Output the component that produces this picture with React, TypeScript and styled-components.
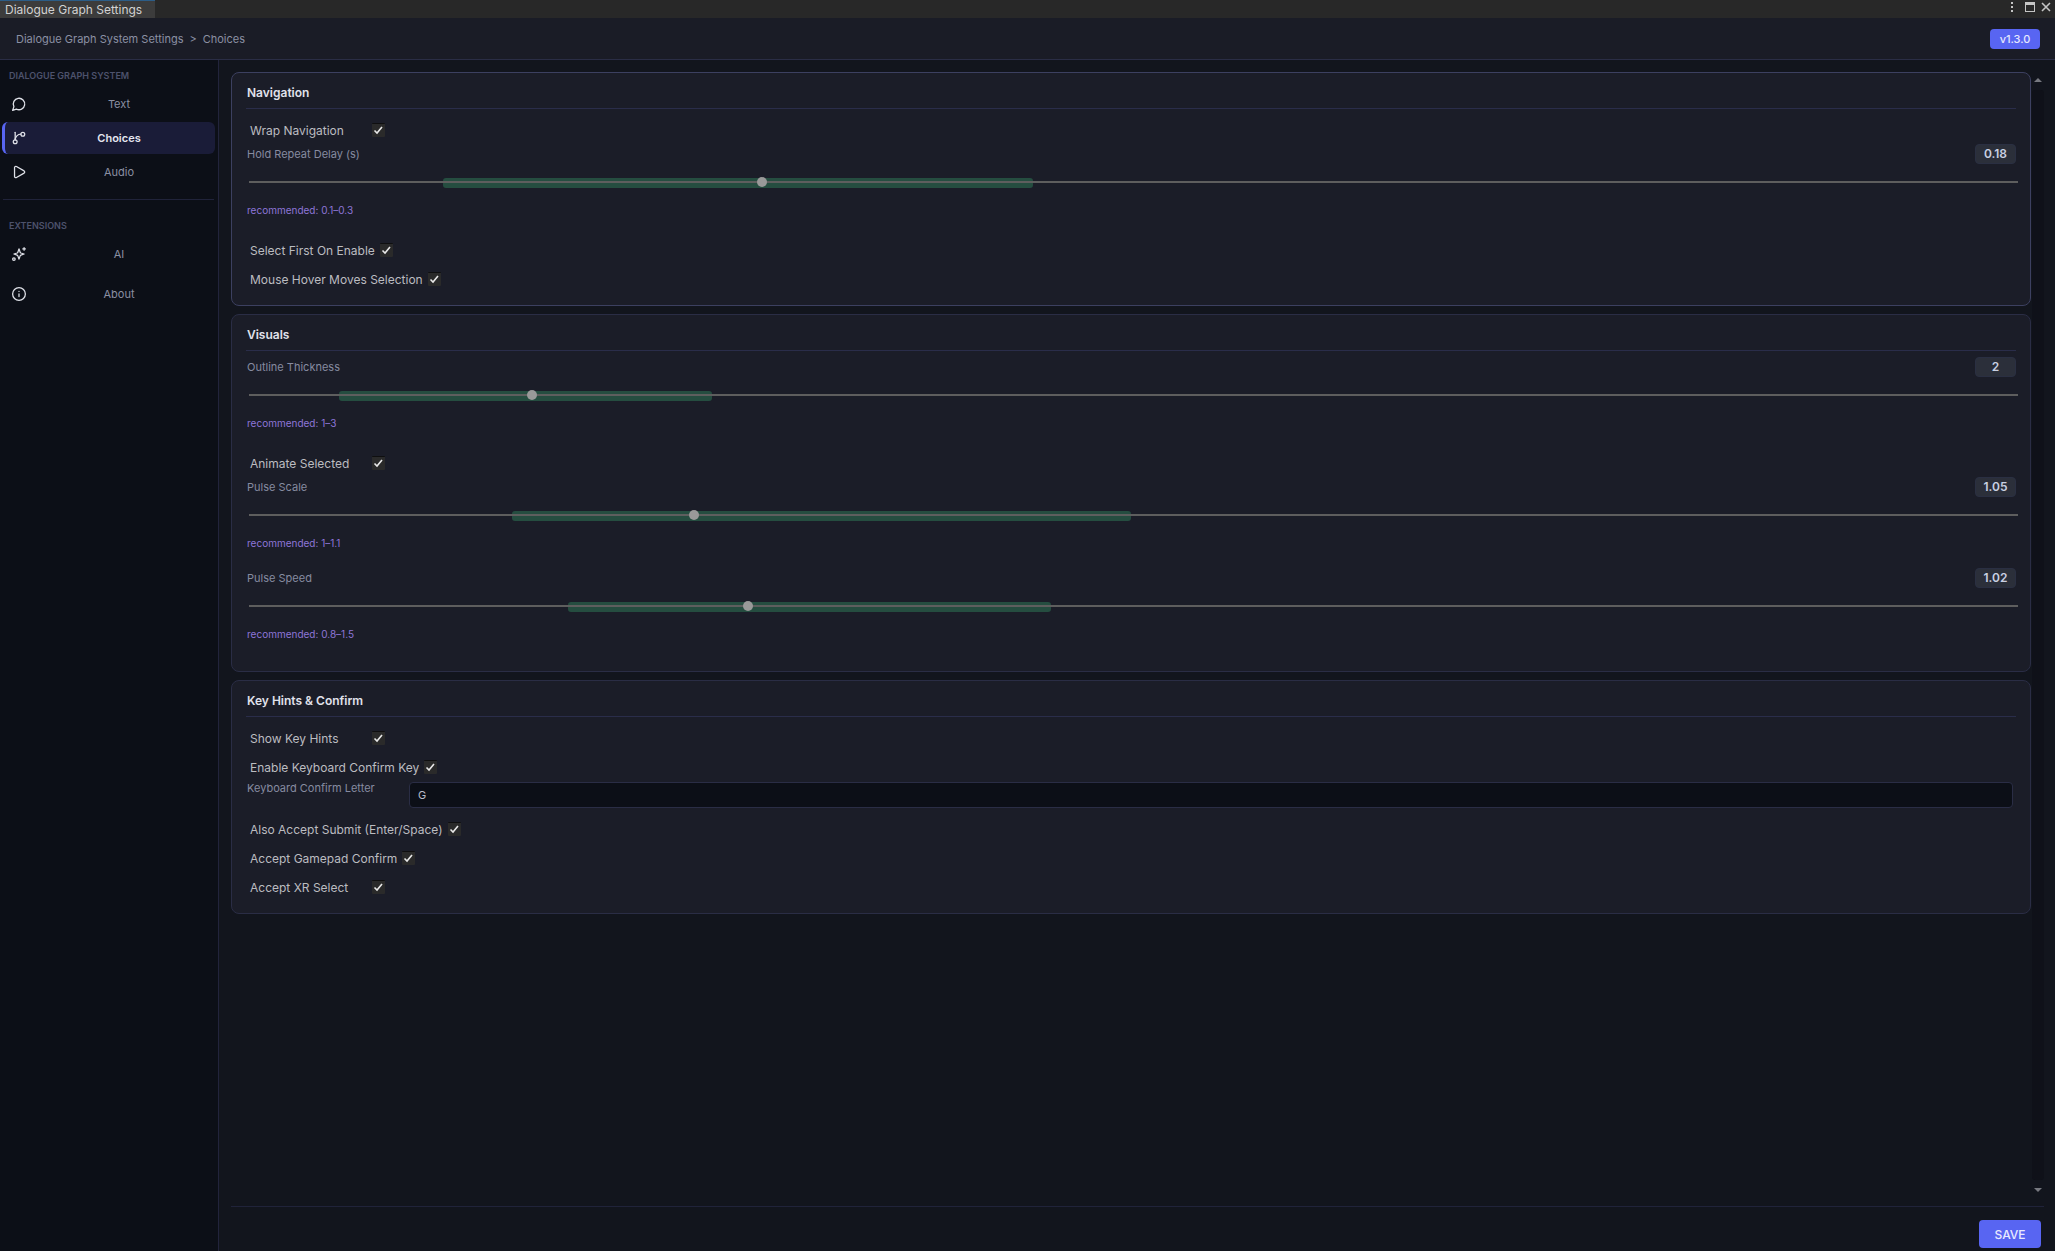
import { useId, useState } from "react";
import type { ReactNode } from "react";
import styled, { createGlobalStyle } from "styled-components";

const GlobalStyle = createGlobalStyle`
  * { box-sizing: border-box; }
  html, body, #root { height: 100%; margin: 0; }
  body { background: #12151d; }
  body, button, input { font-family: Inter, "Noto Sans", sans-serif; }
`;

const Window = styled.div`
  display: flex;
  flex-direction: column;
  height: 100%;
  min-height: 100%;
  color: #bdbfc4;
  font-size: 12px;
  line-height: 16px;
`;

const TitleBar = styled.div`
  display: flex;
  justify-content: space-between;
  flex: none;
  height: 18px;
  background: #282828;
`;

const WindowTab = styled.div`
  width: 155px;
  padding-left: 5px;
  border-top: 1px solid #2c5d87;
  background: #3c3c3c;
  color: #d2d2d2;
  font-size: 12px;
  line-height: 18px;
  white-space: nowrap;
`;

const WindowButtons = styled.div`
  display: flex;
  align-items: flex-start;
  gap: 6px;
  padding: 1px 4px 0 0;
`;

const WindowButton = styled.button`
  display: flex;
  padding: 0;
  border: 0;
  background: none;
  color: #c4c4c4;
`;

const Header = styled.header`
  display: flex;
  align-items: center;
  justify-content: space-between;
  flex: none;
  height: 42px;
  padding: 0 15px 0 16px;
  border-bottom: 1px solid #2a2d45;
  background: #1a1c26;
`;

const Breadcrumbs = styled.nav`
  display: flex;
  gap: 6px;
  color: #8b90a3;
  font-size: 11px;
`;

const Version = styled.span`
  display: grid;
  place-items: center;
  width: 50px;
  height: 20px;
  border-radius: 4px;
  background: #5865f2;
  color: #e6e8ff;
  font-size: 11px;
  font-weight: 500;
`;

const Columns = styled.div`
  display: flex;
  flex: 1;
  min-height: 0;
`;

const Sidebar = styled.aside`
  display: flex;
  flex-direction: column;
  flex: none;
  width: 219px;
  padding: 7px 3px 0 2px;
  border-right: 1px solid #22243c;
  background: #0c0f17;
`;

const NavList = styled.nav<{ $gap: number }>`
  display: flex;
  flex-direction: column;
  gap: ${(p) => p.$gap}px;
`;

const NavHeading = styled.h2`
  margin: 0;
  padding: 1px 0 4px 7px;
  color: #4d526c;
  font-size: 9px;
  font-weight: 600;
  line-height: 16px;
`;

const NavItem = styled.button<{ $active?: boolean }>`
  display: flex;
  align-items: center;
  height: 32px;
  padding: 0 3px 0 7px;
  border: 0;
  border-left: 3px solid ${(p) => (p.$active ? "#5865f2" : "transparent")};
  border-radius: 6px;
  background: ${(p) => (p.$active ? "#1a1c38" : "transparent")};
  color: ${(p) => (p.$active ? "#e4e6f0" : "#8b90a3")};
  font-size: 11px;
  font-weight: ${(p) => (p.$active ? 600 : 400)};
  line-height: 16px;
  text-align: center;
`;

const NavIcon = styled.svg`
  flex: none;
  width: 14px;
  height: 14px;
  overflow: visible;
  fill: none;
  stroke: #dfe1e8;
  stroke-width: 2;
  stroke-linecap: round;
  stroke-linejoin: round;
`;

const NavText = styled.span`
  flex: 1;
`;

const NavDivider = styled.hr`
  width: 211px;
  height: 1px;
  margin: 11px 0 17px 1px;
  border: 0;
  background: #20233a;
`;

const Main = styled.main`
  display: flex;
  flex-direction: column;
  flex: 1;
  min-width: 0;
  padding: 12px 11px 3px 12px;
`;

const ScrollArea = styled.div`
  display: flex;
  flex: 1;
  gap: 1px;
  min-height: 0;
`;

const Cards = styled.div`
  display: flex;
  flex-direction: column;
  flex: 1;
  gap: 8px;
  min-width: 0;
`;

const ScrollBar = styled.div`
  display: flex;
  flex-direction: column;
  align-items: center;
  flex: none;
  width: 12px;
  padding: 6px 0 14px;
`;

const ScrollTrack = styled.div`
  flex: 1;
  width: 12px;
  margin: 8px 0;
  border-radius: 3px;
  background: #0f1119;
`;

const ScrollArrow = styled.svg`
  width: 8px;
  height: 4px;
  fill: #777980;
`;

const Footer = styled.footer`
  display: flex;
  justify-content: flex-end;
  flex: none;
  padding: 13px 3px 0 0;
  border-top: 1px solid #20233a;
`;

const SaveButton = styled.button`
  width: 62px;
  height: 28px;
  padding: 0;
  border: 0;
  border-radius: 4px;
  background: #5865f2;
  color: #e8eaff;
  font-size: 12px;
  font-weight: 500;
`;

const CardFrame = styled.section<{ $hovered?: boolean }>`
  padding: 0 14px 12px;
  border: 1px solid ${(p) => (p.$hovered ? "#3c4060" : "#2a2d45")};
  border-radius: 8px;
  background: #1b1d28;
`;

const CardTitle = styled.h3`
  margin: 0 0 6px;
  padding: 12px 1px 7px;
  border-bottom: 1px solid #2a2d4a;
  color: #e0e2ec;
  font-size: 12px;
  font-weight: 600;
  line-height: 16px;
`;

const ToggleRow = styled.div`
  display: flex;
  align-items: center;
  height: 29px;
  padding: 1px 0 0 4px;
`;

const ToggleLabel = styled.label`
  min-width: 117px;
  margin-right: 5px;
  padding-top: 2px;
  color: #bbbcc0;
  font-size: 12px;
`;

const CheckBox = styled.input`
  width: 13px;
  height: 14px;
  margin: 0;
  appearance: none;
  border-top: 1px solid #0f0f10;
  border-radius: 1px;
  background: #2a2a2a
    url("data:image/svg+xml,%3Csvg xmlns='http://www.w3.org/2000/svg' viewBox='0 0 13 13'%3E%3Cpath d='M2.5 6.5 5 9 10 3' fill='none' stroke='%23e8e8e8' stroke-width='1.6'/%3E%3C/svg%3E")
    center / 13px 13px no-repeat;
`;

const SliderBlock = styled.div`
  height: 91px;
`;

const SliderHead = styled.div`
  display: flex;
  align-items: center;
  justify-content: space-between;
  height: 20px;
  padding-left: 1px;
`;

const FieldLabel = styled.label`
  color: #868ba0;
  font-size: 11px;
`;

const Readout = styled.output`
  display: grid;
  place-items: center;
  width: 41px;
  height: 20px;
  border: 1px solid #2a2f42;
  border-radius: 4px;
  background: #2b2f3a;
  color: #c9d0e2;
  font-size: 12px;
  font-weight: 600;
`;

const SliderTrack = styled.div`
  position: relative;
  height: 10px;
  margin: 13px -2px 0 3px;
`;

const Recommended = styled.div`
  position: absolute;
  top: 1px;
  height: 10px;
  border-radius: 3px;
  background: #254d40;
`;

const Range = styled.input`
  position: relative;
  display: block;
  width: 100%;
  height: 10px;
  margin: 0;
  appearance: none;
  background: linear-gradient(#5e5e5e, #5e5e5e) center / 100% 2px no-repeat;

  &::-webkit-slider-thumb {
    width: 10px;
    height: 10px;
    appearance: none;
    border-radius: 50%;
    background: #999999;
  }
`;

const Hint = styled.p`
  margin: 15px 0 0 1px;
  color: #8e76d8;
  font-size: 10px;
  line-height: 16px;
`;

const TextRow = styled.div`
  display: flex;
  align-items: flex-start;
  height: 33px;
  padding: 1px 3px 0 1px;
`;

const TextLabel = styled(FieldLabel)`
  width: 162px;
  line-height: 12px;
`;

const TextInput = styled.input`
  flex: 1;
  min-width: 0;
  height: 26px;
  padding: 0 8px 1px;
  border: 1px solid #2a2d45;
  border-radius: 4px;
  background: #0c0f17;
  color: #b9bcc8;
  font-size: 11px;
`;

function Card({ title, hovered, children }: { title: string; hovered?: boolean; children: ReactNode }) {
  return (
    <CardFrame $hovered={hovered}>
      <CardTitle>{title}</CardTitle>
      {children}
    </CardFrame>
  );
}

function Toggle({ label }: { label: string }) {
  const id = useId();
  return (
    <ToggleRow>
      <ToggleLabel htmlFor={id}>{label}</ToggleLabel>
      <CheckBox id={id} type="checkbox" defaultChecked />
    </ToggleRow>
  );
}

interface SliderProps {
  label: string;
  min: number;
  max: number;
  initial: number;
  hint: string;
  /** Start and end of the recommended band, in percent of the track. */
  band: [number, number];
}

function Slider({ label, min, max, initial, hint, band }: SliderProps) {
  const id = useId();
  const [value, setValue] = useState(initial);
  return (
    <SliderBlock>
      <SliderHead>
        <FieldLabel htmlFor={id}>{label}</FieldLabel>
        <Readout htmlFor={id}>{Number(value.toFixed(2))}</Readout>
      </SliderHead>
      <SliderTrack>
        <Recommended style={{ left: `${band[0]}%`, width: `${band[1] - band[0]}%` }} />
        <Range
          id={id}
          type="range"
          min={min}
          max={max}
          step="any"
          value={value}
          onChange={(e) => setValue(Number(e.target.value))}
        />
      </SliderTrack>
      <Hint>recommended: {hint}</Hint>
    </SliderBlock>
  );
}

export default function App() {
  return (
    <>
      <GlobalStyle />
      <Window>
        <TitleBar>
          <WindowTab>Dialogue Graph Settings</WindowTab>
          <WindowButtons>
            <WindowButton aria-label="Menu">
              <svg width="12" height="12" fill="currentColor">
                <rect x="4" y="1" width="2" height="2" />
                <rect x="4" y="5" width="2" height="2" />
                <rect x="4" y="9" width="2" height="2" />
              </svg>
            </WindowButton>
            <WindowButton aria-label="Maximize">
              <svg width="10" height="12" fill="none" stroke="currentColor">
                <rect x="0.5" y="1.5" width="9" height="9" />
                <path d="M0 2.5h10" strokeWidth="3" />
              </svg>
            </WindowButton>
            <WindowButton aria-label="Close">
              <svg width="10" height="12" fill="none" stroke="currentColor" strokeWidth="1.6">
                <path d="M1 2l8 8M9 2l-8 8" />
              </svg>
            </WindowButton>
          </WindowButtons>
        </TitleBar>

        <Header>
          <Breadcrumbs aria-label="Breadcrumb">
            <span>Dialogue Graph System Settings</span>
            <span>&gt;</span>
            <span>Choices</span>
          </Breadcrumbs>
          <Version>v1.3.0</Version>
        </Header>

        <Columns>
          <Sidebar>
            <NavHeading>DIALOGUE GRAPH SYSTEM</NavHeading>
            <NavList $gap={2}>
              <NavItem>
                <NavIcon viewBox="1 1 22 22">
                  <path d="M7.9 20A9 9 0 1 0 4 16.1L2 22Z" />
                </NavIcon>
                <NavText>Text</NavText>
              </NavItem>
              <NavItem $active>
                <NavIcon viewBox="1 1 22 22">
                  <path d="M6 3v12" />
                  <circle cx="18" cy="6" r="3" />
                  <circle cx="6" cy="18" r="3" />
                  <path d="M15 6a9 9 0 0 0-9 9" />
                </NavIcon>
                <NavText>Choices</NavText>
              </NavItem>
              <NavItem>
                <NavIcon viewBox="1 1 22 22">
                  <path d="M5 5a2 2 0 0 1 3-1.7l12 7a2 2 0 0 1 0 3.4l-12 7A2 2 0 0 1 5 19z" />
                </NavIcon>
                <NavText>Audio</NavText>
              </NavItem>
            </NavList>
            <NavDivider />
            <NavHeading>EXTENSIONS</NavHeading>
            <NavList $gap={8}>
              <NavItem>
                <NavIcon viewBox="1 1 22 22">
                  <path d="M12 4l1.8 5.2a2 2 0 0 0 1.2 1.2L20 12l-5 1.7a2 2 0 0 0-1.2 1.2L12 20l-1.8-5.1A2 2 0 0 0 9 13.7L4 12l5-1.6a2 2 0 0 0 1.2-1.2z" />
                  <path d="M20 2v4M22 4h-4" />
                  <circle cx="4" cy="20" r="2" />
                </NavIcon>
                <NavText>AI</NavText>
              </NavItem>
              <NavItem>
                <NavIcon viewBox="1 1 22 22">
                  <circle cx="12" cy="12" r="10" />
                  <path d="M12 16v-4M12 8h.01" />
                </NavIcon>
                <NavText>About</NavText>
              </NavItem>
            </NavList>
          </Sidebar>

          <Main>
            <ScrollArea>
              <Cards>
                <Card title="Navigation" hovered>
                  <Toggle label="Wrap Navigation" />
                  <Slider label="Hold Repeat Delay (s)" min={0.05} max={0.5} initial={0.18} hint="0.1–0.3" band={[10.95, 44.3]} />
                  <Toggle label="Select First On Enable" />
                  <Toggle label="Mouse Hover Moves Selection" />
                </Card>
                <Card title="Visuals">
                  <Slider label="Outline Thickness" min={0.5} max={10} initial={2} hint="1–3" band={[5.1, 26.2]} />
                  <Toggle label="Animate Selected" />
                  <Slider label="Pulse Scale" min={1} max={1.2} initial={1.05} hint="1–1.1" band={[14.85, 49.85]} />
                  <Slider label="Pulse Speed" min={0.5} max={2.35} initial={1.02} hint="0.8–1.5" band={[18.05, 45.35]} />
                </Card>
                <Card title="Key Hints &amp; Confirm">
                  <Toggle label="Show Key Hints" />
                  <Toggle label="Enable Keyboard Confirm Key" />
                  <TextRow>
                    <TextLabel htmlFor="confirm-letter">Keyboard Confirm Letter</TextLabel>
                    <TextInput id="confirm-letter" defaultValue="G" />
                  </TextRow>
                  <Toggle label="Also Accept Submit (Enter/Space)" />
                  <Toggle label="Accept Gamepad Confirm" />
                  <Toggle label="Accept XR Select" />
                </Card>
              </Cards>
              <ScrollBar>
                <ScrollArrow viewBox="0 0 8 4">
                  <path d="M4 0 8 4H0z" />
                </ScrollArrow>
                <ScrollTrack />
                <ScrollArrow viewBox="0 0 8 4">
                  <path d="M4 4 0 0h8z" />
                </ScrollArrow>
              </ScrollBar>
            </ScrollArea>
            <Footer>
              <SaveButton>SAVE</SaveButton>
            </Footer>
          </Main>
        </Columns>
      </Window>
    </>
  );
}
